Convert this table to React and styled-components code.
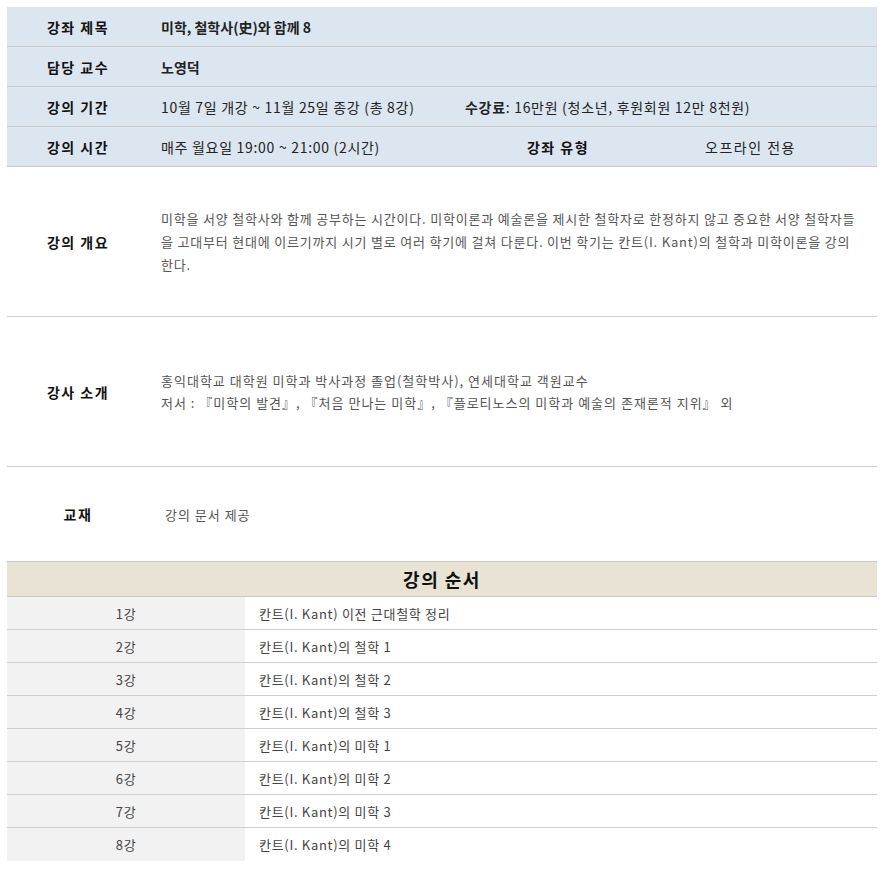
import React from 'react';
import styled, { createGlobalStyle } from 'styled-components';

const GlobalStyle = createGlobalStyle`
    body {
        margin: 0;
        padding: 7px 6px 7px 7px;
        background: #fff;
        font-family: 'Noto Sans CJK KR', 'Noto Sans', sans-serif;
        color: #222;
    }
`;

// 상단 정보 (파란 배경)
const InfoRow = styled.div`
    display: grid;
    grid-template-columns: 142px 304px 210px 1fr;
    align-items: center;
    height: 39px;
    background: #dce6f1;
    border-bottom: 1px solid #c9c9c9;
    font-size: 14px;
    letter-spacing: 0.6px;
`;

const Label = styled.div`
    text-align: center;
    font-weight: 700;
    font-size: 14px;
    letter-spacing: 1.5px;
    color: #111;
`;

const Value = styled.div`
    padding-left: 12px;
    grid-column: ${p => p.$span ? 'span ' + p.$span : 'auto'};
    font-weight: ${p => p.$bold ? 700 : 400};
    letter-spacing: ${p => p.$bold ? 0 : 0.7}px;
    color: #222;
    white-space: nowrap;
`;

const SubLabel = styled.div`
    text-align: center;
    font-weight: 700;
    letter-spacing: 1.5px;
    color: #111;
`;

const SubValue = styled.div`
    padding-left: 42px;
    letter-spacing: 1.5px;
    color: #222;
`;

// 개요, 강사 소개, 교재
const DetailRow = styled.div`
    display: grid;
    grid-template-columns: 142px 1fr;
    align-items: center;
    min-height: ${p => p.$height}px;
    border-bottom: ${p => p.$last ? 'none' : '1px solid #cfcfcf'};
`;

const DetailText = styled.div`
    padding: 0 15px 0 ${p => p.$indent || 12}px;
    font-size: 13px;
    line-height: ${p => p.$lh || 23}px;
    letter-spacing: ${p => p.$ls || 1}px;
    color: #555;
`;

// 강의 순서
const OrderHeader = styled.div`
    height: 34px;
    display: flex;
    align-items: center;
    justify-content: center;
    background: #e9e3d4;
    border-top: 1px solid #c9c9c9;
    border-bottom: 1px solid #c9c9c9;
    font-size: 18px;
    font-weight: 700;
    letter-spacing: 1.5px;
    color: #111;
`;

const OrderRow = styled.div`
    display: grid;
    grid-template-columns: 238px 1fr;
    height: ${p => p.$last ? 33 : 32}px;
    border-bottom: ${p => p.$last ? 'none' : '1px solid #cfcfcf'};
    font-size: 13px;
    letter-spacing: 0.7px;
    color: #444;
`;

const OrderNo = styled.div`
    display: flex;
    align-items: center;
    justify-content: center;
    background: #f2f2f2;
`;

const OrderTitle = styled.div`
    display: flex;
    align-items: center;
    padding-left: 14px;
`;

const lectures = [
    '칸트(I. Kant) 이전 근대철학 정리',
    '칸트(I. Kant)의 철학 1',
    '칸트(I. Kant)의 철학 2',
    '칸트(I. Kant)의 철학 3',
    '칸트(I. Kant)의 미학 1',
    '칸트(I. Kant)의 미학 2',
    '칸트(I. Kant)의 미학 3',
    '칸트(I. Kant)의 미학 4',
];

const App = () => {
    return (
        <>
            <GlobalStyle />
            <InfoRow>
                <Label>강좌 제목</Label>
                <Value $bold $span={3}>미학, 철학사(史)와 함께 8</Value>
            </InfoRow>
            <InfoRow>
                <Label>담당 교수</Label>
                <Value $bold $span={3}>노영덕</Value>
            </InfoRow>
            <InfoRow>
                <Label>강의 기간</Label>
                <Value>10월 7일 개강 ~ 11월 25일 종강 (총 8강)</Value>
                <Value $span={2}><b>수강료</b>: 16만원 (청소년, 후원회원 12만 8천원)</Value>
            </InfoRow>
            <InfoRow>
                <Label>강의 시간</Label>
                <Value>매주 월요일 19:00 ~ 21:00 (2시간)</Value>
                <SubLabel>강좌 유형</SubLabel>
                <SubValue>오프라인 전용</SubValue>
            </InfoRow>

            <DetailRow $height={149}>
                <Label>강의 개요</Label>
                <DetailText $ls={0.8}>
                    미학을 서양 철학사와 함께 공부하는 시간이다. 미학이론과 예술론을 제시한 철학자로 한정하지 않고 중요한 서양 철학자들을 고대부터 현대에 이르기까지 시기 별로 여러 학기에 걸쳐 다룬다. 이번 학기는 칸트(I. Kant)의 철학과 미학이론을 강의한다.
                </DetailText>
            </DetailRow>
            <DetailRow $height={149}>
                <Label>강사 소개</Label>
                <DetailText $lh={22}>
                    홍익대학교 대학원 미학과 박사과정 졸업(철학박사), 연세대학교 객원교수<br />
                    저서 : 『미학의 발견』, 『처음 만나는 미학』, 『플로티노스의 미학과 예술의 존재론적 지위』 외
                </DetailText>
            </DetailRow>
            <DetailRow $height={94} $last>
                <Label>교재</Label>
                <DetailText $indent={16}>강의 문서 제공</DetailText>
            </DetailRow>

            <OrderHeader>강의 순서</OrderHeader>
            {lectures.map((title, i) => (
                <OrderRow key={i} $last={i === lectures.length - 1}>
                    <OrderNo>{i + 1}강</OrderNo>
                    <OrderTitle>{title}</OrderTitle>
                </OrderRow>
            ))}
        </>
    );
};

export default App;
